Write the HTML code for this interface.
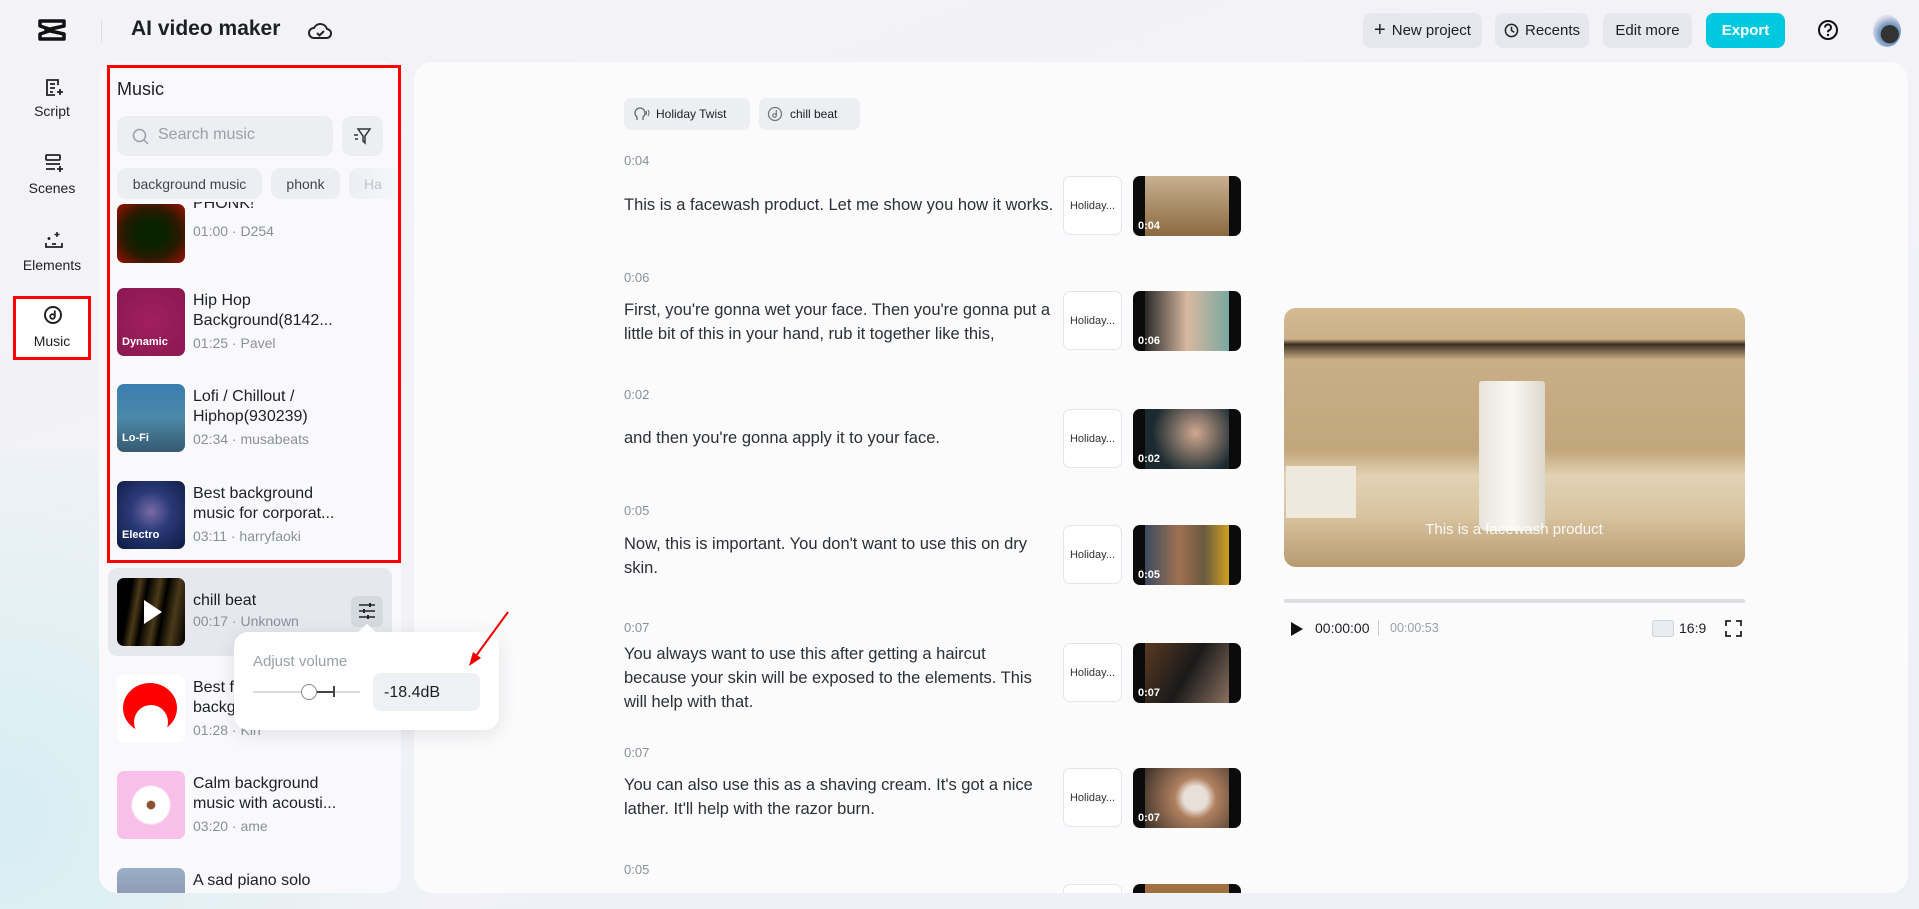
<!DOCTYPE html>
<html><head><meta charset="utf-8"><style>
*{box-sizing:border-box;margin:0;padding:0}
body{width:1919px;height:909px;overflow:hidden;font-family:"Liberation Sans",sans-serif;background:linear-gradient(160deg,#f3f3f6 0%,#f2f2f7 50%,#eef0f6 100%);position:relative;color:#1c1f23}
.bgtint{position:absolute;left:0;top:450px;width:500px;height:459px;background:radial-gradient(circle at 0% 80%,#d6eef2 0%,rgba(230,240,245,0) 70%)}
.abs{position:absolute}
.btn{position:absolute;top:13px;height:35px;border-radius:8px;background:#e5e7ec;font-size:15px;display:flex;align-items:center;justify-content:center;gap:6px;color:#1c1f23}
.side{position:absolute;left:13px;width:78px;text-align:center;font-size:14px;color:#1c1f23}
.panel{position:absolute;left:99px;top:62px;width:302px;height:831px;background:#f9f9fb;border-radius:18px;overflow:hidden}
.chip{position:absolute;top:106px;height:31px;border-radius:9px;background:#eceef2;font-size:14px;color:#41464c;display:flex;align-items:center;justify-content:center}
.item{position:absolute;left:18px;width:270px}
.thumb{position:absolute;left:0;top:0;width:68px;height:68px;border-radius:7px;overflow:hidden}
.tl{position:absolute;left:5px;bottom:8px;color:#fff;font-weight:bold;font-size:11px}
.tt{position:absolute;left:76px;font-size:16px;line-height:20px;color:#1c1f23;font-weight:500}
.ts{position:absolute;left:76px;font-size:14px;color:#8a9099}
.main{position:absolute;left:414px;top:62px;width:1494px;height:831px;background:#fbfbfc;border-radius:18px;overflow:hidden}
.time{position:absolute;left:210px;font-size:13px;color:#8a9099}
.txt{position:absolute;left:210px;width:430px;font-size:16.5px;line-height:24px;color:#2b2f36}
.hb{position:absolute;left:649px;width:59px;height:59px;border:1px solid #e4e6ea;border-radius:7px;background:#fff;font-size:11px;display:flex;align-items:center;justify-content:center;color:#333}
.vt{position:absolute;left:719px;width:108px;height:60px;border-radius:7px;background:#0b0b0b;overflow:hidden}
.vt .im{position:absolute;left:12px;right:12px;top:0;bottom:0}
.vt span{position:absolute;left:5px;bottom:4px;color:#fff;font-size:11px;font-weight:bold}
</style></head><body>
<div class="bgtint"></div>
<svg class="abs" style="left:38px;top:19px" width="28" height="22" viewBox="0 0 28 22"><path d="M2 2h24v5L8 11l18 4v5H2v-5l12-4L2 7z" fill="none" stroke="#111" stroke-width="3.5" stroke-linejoin="round"/></svg>
<div class="abs" style="left:101px;top:20px;width:1px;height:22px;background:#ddd"></div>
<div class="abs" style="left:131px;top:17px;font-size:21px;font-weight:bold">AI video maker</div>
<svg class="abs" style="left:308px;top:20px" width="24" height="22" viewBox="0 0 24 22"><path d="M6 18a5 5 0 0 1 0-10 7 7 0 0 1 13 1 4.5 4.5 0 0 1-1 9z" fill="none" stroke="#222" stroke-width="2"/><path d="M9 13l2.5 2.5L16 11" fill="none" stroke="#222" stroke-width="2"/></svg>
<div class="btn" style="left:1363px;width:119px"><span style="font-size:20px">+</span>New project</div>
<div class="btn" style="left:1495px;width:94px"><svg width="15" height="15" viewBox="0 0 16 16"><circle cx="8" cy="8" r="6.5" fill="none" stroke="#222" stroke-width="1.6"/><path d="M8 4v4l3 2" fill="none" stroke="#222" stroke-width="1.6"/></svg>Recents</div>
<div class="btn" style="left:1603px;width:89px">Edit more</div>
<div class="btn" style="left:1706px;width:79px;background:#00c8df;color:#fff;font-weight:bold">Export</div>
<svg class="abs" style="left:1817px;top:19px" width="22" height="22" viewBox="0 0 22 22"><circle cx="11" cy="11" r="9" fill="none" stroke="#111" stroke-width="2"/><path d="M8 8.5a3 3 0 1 1 4 2.8c-.8.4-1 1-1 2" fill="none" stroke="#111" stroke-width="2"/><circle cx="11" cy="16" r="1.2" fill="#111"/></svg>
<div class="abs" style="left:1873px;top:15px;width:28px;height:32px;border-radius:50%;background:radial-gradient(circle at 60% 60%,#333 0 35%,#6a8fb8 36%,#dde 70%)"></div>
<svg class="abs" style="left:44px;top:77px" width="20" height="20" viewBox="0 0 20 20"><path d="M14 8V3H3v15h8" fill="none" stroke="#222" stroke-width="1.8"/><path d="M6 7h5M6 11h5M6 15h3" stroke="#222" stroke-width="1.8"/><path d="M16 12v6M13 15h6" stroke="#222" stroke-width="1.8"/></svg>
<div class="side" style="top:103px">Script</div>
<svg class="abs" style="left:44px;top:153px" width="20" height="20" viewBox="0 0 20 20"><rect x="2" y="2" width="14" height="5" rx="1" fill="none" stroke="#222" stroke-width="1.8"/><path d="M2 11h14M2 16h9" stroke="#222" stroke-width="1.8"/><path d="M16 13v6M13 16h6" stroke="#222" stroke-width="1.8"/></svg>
<div class="side" style="top:180px">Scenes</div>
<svg class="abs" style="left:44px;top:230px" width="20" height="20" viewBox="0 0 20 20"><path d="M13 2v5M10.5 4.5h5M5 7v3M3.5 8.5h3" stroke="#222" stroke-width="1.6"/><path d="M2 13v4h16v-4M8 14h4" fill="none" stroke="#222" stroke-width="1.8"/></svg>
<div class="side" style="top:257px">Elements</div>
<div class="abs" style="left:13px;top:296px;width:78px;height:64px;background:#fff;border:3px solid #f00"></div>
<svg class="abs" style="left:43px;top:305px" width="20" height="20" viewBox="0 0 20 20"><circle cx="10" cy="10" r="8" fill="none" stroke="#222" stroke-width="2"/><circle cx="9.5" cy="11.5" r="2.3" fill="none" stroke="#222" stroke-width="1.8"/><path d="M11.8 11.5V5.5" stroke="#222" stroke-width="1.8"/></svg>
<div class="side" style="top:333px">Music</div>
<div class="panel">
<div class="abs" style="left:18px;top:17px;font-size:18px;font-weight:500">Music</div>
<div class="abs" style="left:18px;top:54px;width:216px;height:40px;border-radius:9px;background:#eceef2"></div>
<svg class="abs" style="left:33px;top:66px" width="17" height="17" viewBox="0 0 17 17"><circle cx="7.5" cy="7.5" r="6" fill="none" stroke="#9aa0a8" stroke-width="1.5"/><path d="M12 12l4 4" stroke="#9aa0a8" stroke-width="1.5"/></svg>
<div class="abs" style="left:59px;top:64px;font-size:16px;color:#9aa0a8">Search music</div>
<div class="abs" style="left:243px;top:54px;width:41px;height:40px;border-radius:9px;background:#eceef2"></div>
<svg class="abs" style="left:254px;top:65px" width="19" height="18" viewBox="0 0 19 18"><path d="M5 2h12l-5 7v7l-2-2V9z" fill="none" stroke="#333" stroke-width="1.5"/><path d="M1 8h4M2 12h3" stroke="#333" stroke-width="1.5"/></svg>
<div class="chip" style="left:18px;width:145px">background music</div>
<div class="chip" style="left:172px;width:69px">phonk</div>
<div class="chip" style="left:250px;width:60px;justify-content:flex-start;padding-left:15px;color:#c0c4ca;background:linear-gradient(90deg,#eceef2,#f9f9fb)">Ha</div>
<div class="item" style="top:150px"><div class="thumb" style="top:-8px;height:59px;background:radial-gradient(ellipse at 50% 50%,#0a2200 30%,#2b1a00 60%,#a01000 100%)"></div><div class="ts" style="top:11px">01:00 · D254</div><div class="tt" style="top:-10px;height:12px;overflow:hidden;line-height:4px">PHONK!</div></div>
<div class="item" style="top:226px"><div class="thumb" style="background:radial-gradient(#a02060,#8a1850)"><span class="tl">Dynamic</span></div><div class="tt" style="top:3px">Hip Hop<br>Background(8142...</div><div class="ts" style="top:47px">01:25 · Pavel</div></div>
<div class="item" style="top:322px"><div class="thumb" style="background:linear-gradient(180deg,#3a7fb0,#4c88a8 50%,#355a70)"><span class="tl">Lo-Fi</span></div><div class="tt" style="top:3px">Lofi / Chillout /<br>Hiphop(930239)</div><div class="ts" style="top:47px">02:34 · musabeats</div></div>
<div class="item" style="top:419px"><div class="thumb" style="background:radial-gradient(circle at 50% 45%,#7a6aa8 0%,#2a3a78 40%,#0c1a40 100%)"><span class="tl">Electro</span></div><div class="tt" style="top:3px">Best background<br>music for corporat...</div><div class="ts" style="top:47px">03:11 · harryfaoki</div></div>
<div class="abs" style="left:9px;top:506px;width:284px;height:88px;border-radius:9px;background:#e6e8ee"></div>
<div class="item" style="top:516px"><div class="thumb" style="background:linear-gradient(100deg,#000 20%,#4a3a18 30%,#000 40%,#4a3a18 55%,#000 65%,#4a3a18 80%,#000)"><div style="position:absolute;left:27px;top:22px;width:0;height:0;border-left:18px solid #fff;border-top:12px solid transparent;border-bottom:12px solid transparent"></div></div><div class="tt" style="top:13px">chill beat</div><div class="ts" style="top:35px">00:17 · Unknown</div></div>
<div class="abs" style="left:252px;top:534px;width:32px;height:31px;border-radius:6px;background:#d5d9e0"></div>
<svg class="abs" style="left:259px;top:540px" width="18" height="18" viewBox="0 0 18 18"><path d="M1 3h16M1 9h16M1 15h16" stroke="#222" stroke-width="1.6"/><path d="M12 1v4M6 7v4M10 13v4" stroke="#222" stroke-width="2"/></svg>
<div class="item" style="top:613px"><div class="thumb" style="background:#fff"><div style="position:absolute;left:6px;top:8px;width:54px;height:50px;border-radius:50%;background:#f00"></div><div style="position:absolute;left:17px;top:30px;width:34px;height:34px;border-radius:50%;background:#fff"></div></div><div class="tt" style="top:3px">Best f<br>backg</div><div class="ts" style="top:47px">01:28 · Kin</div></div>
<div class="item" style="top:709px"><div class="thumb" style="background:radial-gradient(circle,#8a5030 0 8%,#fff 10% 38%,#f8c0e8 42%)"></div><div class="tt" style="top:3px">Calm background<br>music with acousti...</div><div class="ts" style="top:47px">03:20 · ame</div></div>
<div class="item" style="top:806px"><div class="thumb" style="background:linear-gradient(#9ab0c8,#7a7890)"></div><div class="tt" style="top:3px">A sad piano solo</div></div>
</div>
<div class="abs" style="left:107px;top:65px;width:294px;height:498px;border:3px solid #f00"></div>
<div class="main">
<div class="abs" style="left:210px;top:36px;width:126px;height:32px;border-radius:7px;background:#eceef2;font-size:12px;font-weight:500;display:flex;align-items:center;padding-left:32px">Holiday Twist</div>
<svg class="abs" style="left:219px;top:44px" width="18" height="16" viewBox="0 0 18 16"><path d="M4 14v-3a5 5 0 1 1 6 0v3" fill="none" stroke="#666" stroke-width="1.3"/><path d="M13 5q1 2 0 4M15 4q2 3 0 6" fill="none" stroke="#666" stroke-width="1"/></svg>
<div class="abs" style="left:345px;top:36px;width:101px;height:32px;border-radius:7px;background:#eceef2;font-size:12px;font-weight:500;display:flex;align-items:center;padding-left:31px">chill beat</div>
<svg class="abs" style="left:353px;top:44px" width="16" height="16" viewBox="0 0 16 16"><circle cx="8" cy="8" r="6.5" fill="none" stroke="#777" stroke-width="1.3"/><circle cx="7.5" cy="9.5" r="1.8" fill="none" stroke="#777" stroke-width="1.2"/><path d="M9.3 9.5V4" stroke="#777" stroke-width="1.2"/></svg>
<div class="time" style="top:91px">0:04</div>
<div class="txt" style="top:131px;width:450px">This is a facewash product. Let me show you how it works.</div>
<div class="hb" style="top:114px">Holiday...</div>
<div class="vt" style="top:114px"><div class="im" style="background:linear-gradient(#c8b090,#8a6a40)"></div><span>0:04</span></div>
<div class="time" style="top:208px">0:06</div>
<div class="txt" style="top:236px">First, you're gonna wet your face. Then you're gonna put a little bit of this in your hand, rub it together like this,</div>
<div class="hb" style="top:229px">Holiday...</div>
<div class="vt" style="top:229px"><div class="im" style="background:linear-gradient(90deg,#2a2a2a,#d8b8a0 50%,#7aa8a0)"></div><span>0:06</span></div>
<div class="time" style="top:325px">0:02</div>
<div class="txt" style="top:364px">and then you're gonna apply it to your face.</div>
<div class="hb" style="top:347px">Holiday...</div>
<div class="vt" style="top:347px"><div class="im" style="background:radial-gradient(circle at 60% 40%,#d0a890,#1a2a30 70%)"></div><span>0:02</span></div>
<div class="time" style="top:441px">0:05</div>
<div class="txt" style="top:470px">Now, this is important. You don't want to use this on dry skin.</div>
<div class="hb" style="top:463px">Holiday...</div>
<div class="vt" style="top:463px"><div class="im" style="background:linear-gradient(90deg,#3a4a60,#a07050 40%,#6a5a40 70%,#d0a020)"></div><span>0:05</span></div>
<div class="time" style="top:558px">0:07</div>
<div class="txt" style="top:580px">You always want to use this after getting a haircut<br>because your skin will be exposed to the elements. This will help with that.</div>
<div class="hb" style="top:581px">Holiday...</div>
<div class="vt" style="top:581px"><div class="im" style="background:linear-gradient(120deg,#5a3a20,#1a1a1a 50%,#8a7060)"></div><span>0:07</span></div>
<div class="time" style="top:683px">0:07</div>
<div class="txt" style="top:711px">You can also use this as a shaving cream. It's got a nice lather. It'll help with the razor burn.</div>
<div class="hb" style="top:706px">Holiday...</div>
<div class="vt" style="top:706px"><div class="im" style="background:radial-gradient(circle at 60% 50%,#e8e0d8 0 20%,#b08060 35%,#3a3028)"></div><span>0:07</span></div>
<div class="time" style="top:800px">0:05</div>
<div class="hb" style="top:822px">Holiday...</div>
<div class="vt" style="top:822px"><div class="im" style="background:#a07040"></div></div>
<div class="abs" style="left:870px;top:246px;width:461px;height:259px;border-radius:12px;overflow:hidden;background:linear-gradient(180deg,#d4bb90 0%,#cbb088 12%,#3a3020 14%,#c9ae86 20%,#c2a67c 55%,#e2d2b4 65%,#d8c4a0 80%,#b89a70 100%)">
<div class="abs" style="left:195px;top:73px;width:66px;height:150px;background:linear-gradient(90deg,#e8e4dc,#faf8f4,#ddd8cc);border-radius:3px 3px 8px 8px"></div>
<div class="abs" style="left:2px;top:158px;width:70px;height:52px;background:#efe8dc"></div>
<div class="abs" style="left:0;width:460px;top:213px;text-align:center;color:#fff;font-size:15px;opacity:.9">This is a facewash product</div>
</div>
<div class="abs" style="left:870px;top:537px;width:461px;height:4px;border-radius:2px;background:#dcdde0"></div>
<div class="abs" style="left:877px;top:560px;width:0;height:0;border-left:12px solid #111;border-top:7px solid transparent;border-bottom:7px solid transparent"></div>
<div class="abs" style="left:901px;top:558px;font-size:14px">00:00:00</div>
<div class="abs" style="left:964px;top:558px;width:1px;height:16px;background:#ccc"></div>
<div class="abs" style="left:976px;top:559px;font-size:12.5px;color:#9aa0a8">00:00:53</div>
<div class="abs" style="left:1238px;top:558px;width:22px;height:17px;border-radius:3px;background:#e9ecf0;border:1px solid #cfd3d8"></div>
<div class="abs" style="left:1265px;top:558px;font-size:14px">16:9</div>
<svg class="abs" style="left:1311px;top:558px" width="17" height="17" viewBox="0 0 17 17"><path d="M1 6V1h5M11 1h5v5M16 11v5h-5M6 16H1v-5" fill="none" stroke="#222" stroke-width="1.8"/></svg>
</div>
<div class="abs" style="left:234px;top:632px;width:265px;height:98px;background:#fff;border-radius:14px;box-shadow:0 4px 20px rgba(0,0,0,.1)"></div>
<div class="abs" style="left:361px;top:626px;width:12px;height:12px;background:#fff;transform:rotate(45deg)"></div>
<div class="abs" style="left:253px;top:653px;font-size:15px;color:#9aa0a8">Adjust volume</div>
<div class="abs" style="left:253px;top:691px;width:107px;height:2px;background:#d8dadf"></div>
<div class="abs" style="left:309px;top:691px;width:25px;height:2px;background:#444"></div>
<div class="abs" style="left:333px;top:686px;width:2px;height:11px;background:#444"></div>
<div class="abs" style="left:301px;top:684px;width:16px;height:16px;border-radius:50%;background:#fff;border:1.5px solid #888"></div>
<div class="abs" style="left:373px;top:673px;width:107px;height:38px;border-radius:8px;background:#eef0f3;font-size:16px;padding:11px 11px">-18.4dB</div>
<svg class="abs" style="left:465px;top:610px" width="45" height="60" viewBox="0 0 45 60"><path d="M43 2L8 50" stroke="#e00" stroke-width="2"/><path d="M4 56l4-14 8 6z" fill="#e00"/></svg>
</body></html>
